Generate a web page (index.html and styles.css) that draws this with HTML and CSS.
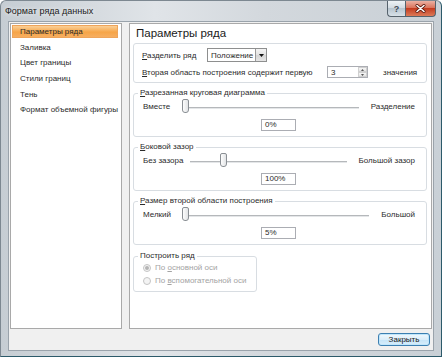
FILE: index.html
```html
<!DOCTYPE html>
<html lang="ru">
<head>
    <meta charset="UTF-8">
    <title>Формат ряда данных</title>
    <link rel="stylesheet" href="styles.css">
</head>
<body>
    <div class="window">
        <div class="titlebar">
            <span class="title">Формат ряда данных</span>
            <div class="caption-buttons">
                <span class="btn-help">?</span>
                <span class="btn-close">
                    <svg width="11" height="9" viewBox="0 0 11 9">
                        <path d="M2 1.5 L9 7.5 M9 1.5 L2 7.5" stroke="#5a1a10" stroke-width="3" stroke-linecap="round"/>
                        <path d="M2 1.5 L9 7.5 M9 1.5 L2 7.5" stroke="#fff" stroke-width="1.6" stroke-linecap="round"/>
                    </svg>
                </span>
            </div>
        </div>

        <div class="client">
            <div class="panes">
                <ul class="nav">
                    <li class="nav-item is-active">Параметры ряда</li>
                    <li class="nav-item">Заливка</li>
                    <li class="nav-item">Цвет границы</li>
                    <li class="nav-item">Стили границ</li>
                    <li class="nav-item">Тень</li>
                    <li class="nav-item">Формат объемной фигуры</li>
                </ul>

                <div class="content">
                    <h2 class="content-title">Параметры ряда</h2>

                    <div class="group group-plain">
                        <div class="row row-split">
                            <span class="label-split"><u>Р</u>азделить ряд</span>
                            <div class="select">
                                <span class="select-value">Положение</span>
                                <span class="select-btn">
                                    <svg width="5" height="3" viewBox="0 0 5 3"><path d="M0 0 H5 L2.5 3 Z" fill="#111"/></svg>
                                </span>
                            </div>
                        </div>
                        <div class="row row-second">
                            <span class="label-second"><u>В</u>торая область построения содержит первую</span>
                            <div class="spin">
                                <span class="spin-value">3</span>
                                <span class="spin-btns">
                                    <span class="spin-btn"><svg width="3" height="2" viewBox="0 0 3 2"><path d="M0 2 H3 L1.5 0 Z" fill="#555"/></svg></span>
                                    <span class="spin-btn"><svg width="3" height="2" viewBox="0 0 3 2"><path d="M0 0 H3 L1.5 2 Z" fill="#555"/></svg></span>
                                </span>
                            </div>
                            <span class="row-after">значения</span>
                        </div>
                    </div>

                    <fieldset class="group">
                        <legend><u>Р</u>азрезанная круговая диаграмма</legend>
                        <div class="slider-row">
                            <span class="slider-min">Вместе</span>
                            <div class="slider">
                                <div class="slider-track"></div>
                                <div class="slider-thumb" style="--pos: 0"></div>
                            </div>
                            <span class="slider-max">Разделение</span>
                        </div>
                        <div class="field-row"><span class="field">0%</span></div>
                    </fieldset>

                    <fieldset class="group">
                        <legend><u>Б</u>оковой зазор</legend>
                        <div class="slider-row">
                            <span class="slider-min">Без зазора</span>
                            <div class="slider">
                                <div class="slider-track"></div>
                                <div class="slider-thumb" style="--pos: 0.2"></div>
                            </div>
                            <span class="slider-max">Большой зазор</span>
                        </div>
                        <div class="field-row"><span class="field">100%</span></div>
                    </fieldset>

                    <fieldset class="group">
                        <legend><u>Р</u>азмер второй области построения</legend>
                        <div class="slider-row">
                            <span class="slider-min">Мелкий</span>
                            <div class="slider">
                                <div class="slider-track"></div>
                                <div class="slider-thumb" style="--pos: 0"></div>
                            </div>
                            <span class="slider-max">Большой</span>
                        </div>
                        <div class="field-row"><span class="field">5%</span></div>
                    </fieldset>

                    <fieldset class="group group-radio">
                        <legend>Построить ряд</legend>
                        <div class="radio is-checked"><span class="radio-dot"></span><span>По <u>о</u>сновной оси</span></div>
                        <div class="radio"><span class="radio-dot"></span><span>По <u>в</u>спомогательной оси</span></div>
                    </fieldset>
                </div>
            </div>

            <div class="footer">
                <button class="btn-close-dialog">Закрыть</button>
            </div>
        </div>
    </div>
</body>
</html>
```

FILE: styles.css
```css
body {
margin: 0;
padding: 0;
font-family: "Liberation Sans", Arial, sans-serif;
font-size: 8px;
color: #2b2b2b;
background: #fff;
}

.window {
width: 442px;
height: 357px;
box-sizing: border-box;
border: 1px solid;
border-color: #7d8891 #2c5a6a #2c5a6a #7d8891;
border-radius: 6px 6px 0 0;
background: linear-gradient(to right, #c6cdd3, #e0e4e8 35%, #d3d8dd 60%, #c9d0d6);
padding: 0 7px 5px 7px;
display: flex;
flex-direction: column;
}

/* title bar */
.titlebar {
height: 20px;
margin: 0 -7px;
padding: 0 5px 0 4px;
display: flex;
justify-content: space-between;
align-items: flex-start;
}

.title {
font-size: 9px;
line-height: 20px;
color: #1a1a1a;
text-shadow: 0 0 4px #fff;
}

.caption-buttons {
display: flex;
}

.btn-help,
.btn-close {
height: 16px;
box-sizing: border-box;
border: 1px solid #56626c;
border-top: none;
display: flex;
align-items: center;
justify-content: center;
}

.btn-help {
width: 18px;
border-radius: 0 0 0 4px;
border-right: none;
background: linear-gradient(to bottom, #eef2f5, #d0d9e0 50%, #b8c5cf 50%, #d8e1e8);
color: #3d4a55;
font-size: 9px;
font-weight: bold;
}

.btn-close {
width: 31px;
border-radius: 0 0 4px 0;
background: linear-gradient(to bottom, #ebb1a3, #d96d54 50%, #c43c20 50%, #dc7a58);
}

/* client area */
.client {
flex: 1;
background: #f0f0f0;
border: 1px solid #9aa3ab;
padding: 1px 1px 0 1px;
display: flex;
flex-direction: column;
}

.panes {
height: 306px;
display: flex;
gap: 7px;
}

.nav {
width: 112px;
box-sizing: border-box;
margin: 0;
padding: 1px 3px 0 1px;
list-style: none;
background: #fff;
border: 1px solid #a9a9a9;
}

.nav-item {
height: 13px;
line-height: 13px;
margin-bottom: 2.7px;
padding-left: 8px;
white-space: nowrap;
}

.nav-item.is-active {
background: linear-gradient(to bottom, #fbd7a5, #f6a548 55%, #f7b065);
box-shadow: inset 0 0 0 1px #eea45a;
}

.content {
flex: 1;
box-sizing: border-box;
background: #fff;
border: 1px solid #a9a9a9;
padding: 2px 4px 0 3px;
}

.content-title {
margin: 0 0 2px 0;
padding-left: 3px;
font-size: 11.5px;
font-weight: normal;
line-height: 15px;
color: #1a1a1a;
}

/* group boxes */
.group {
margin: 5px 0 0 0;
min-width: 0;
border: 1px solid #d8dde2;
border-radius: 3px;
padding: 0 0 5px 9px;
}

.group legend {
margin-left: -5px;
padding: 0 2px;
line-height: 10px;
}

.group-plain {
margin-top: 0;
padding: 4px 0 4px 8px;
}

.row {
display: flex;
align-items: center;
}

.row-split {
height: 14px;
}

.row-second {
height: 12px;
margin-top: 4px;
}

.label-split {
width: 65px;
}

.label-second {
width: 185px;
white-space: nowrap;
}

.row-after {
margin-left: 15px;
}

.select {
width: 60px;
height: 14px;
box-sizing: border-box;
border: 1px solid #8e8f8f;
display: flex;
align-items: center;
justify-content: space-between;
padding-left: 3px;
}

.select-btn {
width: 11px;
height: 12px;
box-sizing: border-box;
border-left: 1px solid #9a9a9a;
background: linear-gradient(to bottom, #f4f4f4, #e2e2e2 50%, #d4d4d4 50%, #e6e6e6);
display: flex;
align-items: center;
justify-content: center;
}

.spin {
width: 41px;
height: 12px;
box-sizing: border-box;
border: 1px solid #abadb3;
display: flex;
align-items: center;
justify-content: space-between;
padding-left: 3px;
}

.spin-btns {
width: 9px;
height: 10px;
display: flex;
flex-direction: column;
}

.spin-btn {
flex: 1;
display: flex;
align-items: center;
justify-content: center;
background: linear-gradient(to bottom, #f6f6f6, #e4e4e4);
border: 1px solid #d0d0d0;
box-sizing: border-box;
}

/* sliders */
.slider-row {
height: 15px;
margin-top: 1px;
display: flex;
align-items: center;
}

.slider-min {
min-width: 32px;
margin-right: 7px;
}

.slider {
flex: 1;
height: 15px;
position: relative;
margin-right: 12px;
}

.slider-track {
margin-top: 8px;
height: 1px;
border-top: 1px solid #b5b8bb;
background: #e4e6e8;
border-bottom: 1px solid #fff;
}

.slider-thumb {
position: absolute;
top: 0;
left: calc(var(--pos) * (100% - 7px));
width: 7px;
height: 14px;
box-sizing: border-box;
border: 1px solid #8a8f94;
border-radius: 2px 2px 3px 3px;
background: linear-gradient(to right, #fdfdfd, #e2e4e6);
}

.slider-max {
padding-right: 11px;
}

.field-row {
margin-top: 5px;
display: flex;
justify-content: center;
}

.field {
width: 35px;
height: 12px;
box-sizing: border-box;
border: 1px solid #abadb3;
padding-left: 3px;
line-height: 10px;
margin-right: 12px;
}

/* radio group */
.group-radio {
width: 124px;
box-sizing: border-box;
padding-bottom: 4px;
margin-top: 6px;
}

.radio {
height: 13px;
display: flex;
align-items: center;
color: #a3a3a3;
}

.radio-dot {
width: 8px;
height: 8px;
box-sizing: border-box;
border: 1px solid #c5c5c5;
border-radius: 50%;
background: #f4f4f4;
margin-right: 4px;
display: flex;
align-items: center;
justify-content: center;
}

.radio.is-checked .radio-dot::after {
content: "";
width: 4px;
height: 4px;
border-radius: 50%;
background: #b4b4b4;
}

/* footer */
.footer {
display: flex;
justify-content: flex-end;
padding: 4px 2px 4px 0;
}

.btn-close-dialog {
width: 52px;
height: 13px;
padding: 0;
font-family: "Liberation Sans", Arial, sans-serif;
font-size: 8px;
color: #1a1a1a;
border: 1px solid #3c7fb1;
border-radius: 3px;
background: linear-gradient(to bottom, #f1f8fd, #dbeefa 50%, #c4e3f7 50%, #d8eefb);
box-shadow: inset 0 0 0 1px #c0e6fb;
}
```
